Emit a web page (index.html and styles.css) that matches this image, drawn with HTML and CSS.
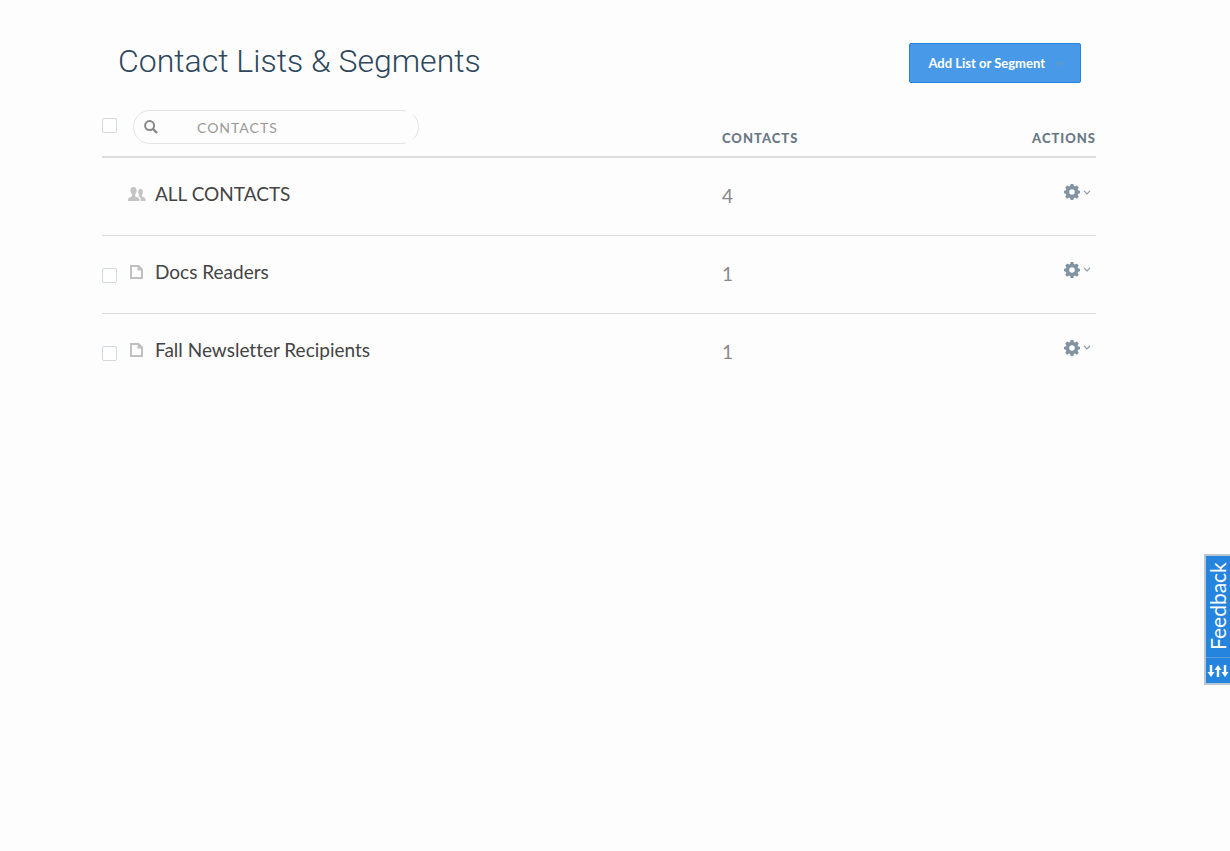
FILE: index.html
```html
<!DOCTYPE html>
<html lang="en">
<head>
<meta charset="utf-8">
<title>Contact Lists &amp; Segments</title>
<link rel="stylesheet" href="styles.css">
</head>
<body>
<svg class="sprite" aria-hidden="true">
  <symbol id="gear" viewBox="0 0 16 16"><path fill-rule="evenodd" d="M6.600 0h2.800l.4 2.100 1.200.5 1.800-1.200 2 2-1.200 1.800.5 1.200 1.900.3v2.600l-1.900.4-.5 1.300 1.200 1.700-2 2-1.800-1.200-1.200.5L9.400 16H6.600l-.4-2-1.200-.5-1.800 1.200-2-2L2.400 11l-.5-1.300L0 9.300V6.700l1.900-.3.5-1.200L1.200 3.400l2-2L5 2.600l1.200-.5zM8 5.200a2.800 2.800 0 1 0 0 5.600 2.800 2.800 0 0 0 0-5.600z"/></symbol>
  <symbol id="chevron" viewBox="0 0 8 5"><path d="M1 .8 4 3.800 7 .8" fill="none" stroke="currentColor" stroke-width="1.200"/></symbol>
  <symbol id="page" viewBox="0 0 13 14"><path d="M1 1h7.500L12 4.500V13H1z" fill="none" stroke="currentColor" stroke-width="2"/><path d="M7.500 0v5.500H13z"/></symbol>
</svg>
<main class="page">
  <header class="page-header">
    <h1 class="title">Contact Lists &amp; Segments</h1>
    <button class="add-button" type="button">Add List or Segment
      <svg class="chevron" aria-hidden="true"><use href="#chevron"/></svg>
    </button>
  </header>
  <table class="lists">
    <thead>
      <tr>
        <th class="check-col"><input class="check" type="checkbox" aria-label="Select all lists"></th>
        <th class="name-col">
          <label class="search">
            <svg class="search-icon" viewBox="0 0 14 14" aria-hidden="true"><circle cx="5.600" cy="5.600" r="4.500" fill="none" stroke="currentColor" stroke-width="2"/><path d="m9 9 4 4" stroke="currentColor" stroke-width="2.400"/></svg>
            <input class="search-input" type="text" placeholder="CONTACTS" aria-label="Search contacts">
          </label>
        </th>
        <th class="count-col" scope="col">CONTACTS</th>
        <th class="action-col" scope="col">ACTIONS</th>
      </tr>
    </thead>
    <tbody>
      <tr>
        <td class="check-col"></td>
        <td class="name-col"><a class="list-link" href="#"><svg class="people" viewBox="0 0 18 15" aria-hidden="true"><path d="M5.500 0C7.500 0 8.600 1.200 8.500 3.300c.5.600.2 1.500-.3 1.900-.2 1-.6 1.600-1 2v1.700c.5 1.200 4.300 1.300 4.300 3.700V14H0v-1.400c0-2.400 3.400-2.500 3.900-3.700V7.200c-.4-.4-.8-1-1-2-.5-.4-.7-1.300-.3-1.900C2.500 1.200 3.500 0 5.500 0zM12.500 2c1.800 0 2.500 1.200 2.300 2.700.4.500.2 1.200-.2 1.500-.1.900-.5 1.400-.8 1.700v1.200c.5 1 3.700 1.300 3.700 3.400V14h-4.800v-1.700c0-1.800-1.200-2.700-2.700-3.300.8-.2 1.200-.5 1.300-.8V7.900c-.3-.3-.7-.8-.8-1.700-.4-.3-.6-1-.2-1.500C10.100 3.200 10.900 2 12.500 2z"/></svg>ALL CONTACTS</a></td>
        <td class="count-col">4</td>
        <td class="action-col"><button class="menu" type="button" aria-label="Actions for all contacts"><svg class="gear"><use href="#gear"/></svg><svg class="chevron"><use href="#chevron"/></svg></button></td>
      </tr>
      <tr>
        <td class="check-col"><input class="check" type="checkbox" aria-label="Select Docs Readers"></td>
        <td class="name-col"><a class="list-link" href="#"><svg class="doc" aria-hidden="true"><use href="#page"/></svg>Docs Readers</a></td>
        <td class="count-col">1</td>
        <td class="action-col"><button class="menu" type="button" aria-label="Actions for Docs Readers"><svg class="gear"><use href="#gear"/></svg><svg class="chevron"><use href="#chevron"/></svg></button></td>
      </tr>
      <tr>
        <td class="check-col"><input class="check" type="checkbox" aria-label="Select Fall Newsletter Recipients"></td>
        <td class="name-col"><a class="list-link" href="#"><svg class="doc" aria-hidden="true"><use href="#page"/></svg>Fall Newsletter Recipients</a></td>
        <td class="count-col">1</td>
        <td class="action-col"><button class="menu" type="button" aria-label="Actions for Fall Newsletter Recipients"><svg class="gear"><use href="#gear"/></svg><svg class="chevron"><use href="#chevron"/></svg></button></td>
      </tr>
    </tbody>
  </table>
</main>
<button class="feedback" type="button">
  <span class="feedback-label">Feedback</span>
  <span class="feedback-mark"><svg class="arrows" viewBox="0 0 20 12" aria-hidden="true"><path d="M1.800 0h2.400v7h2.300L3 12-.5 7h2.300zM8.800 12h2.400V5h2.300L10 0 6.500 5h2.300zM15.800 0h2.400v7h2.300L17 12l-3.500-5h2.300z"/></svg></span>
</button>
</body>
</html>
```

FILE: styles.css
```css
* { box-sizing: border-box; }

body {
  margin: 0;
  background: #fdfdfd;
  color: #444;
  font-family: Lato, "Liberation Sans", sans-serif;
  font-variant-ligatures: none;
}

button, input { font: inherit; }

.sprite { display: none; }
.page { margin: 0 134px 0 102px; }

.page-header {
  display: flex;
  align-items: flex-end;
  justify-content: space-between;
  padding: 39px 15px 0 16px;
}

.title {
  margin: 0;
  color: #2e475d;
  font: 300 32px/44px Roboto, sans-serif;
}

.add-button {
  display: flex;
  align-items: center;
  gap: 11px;
  height: 40px;
  padding: 0 16px 0 18px;
  border: 1px solid #2483e2;
  border-radius: 2px;
  background: #489ae8;
  color: #fff;
  font-size: 13px;
  font-weight: 700;
}

.add-button .chevron { color: #7495b4; }

.lists {
  width: 100%;
  table-layout: fixed;
  border-collapse: collapse;
}

th, td {
  padding: 0;
  text-align: left;
  vertical-align: top;
}

thead tr { height: 74px; border-bottom: 2px solid #dcdcdc; }
tbody tr { height: 78px; }
tbody tr + tr { border-top: 1px solid #dcdcdc; }

.check-col { width: 26px; }
.count-col { width: 187px; }
.action-col { width: 187px; text-align: right; }

th.check-col { padding-top: 35px; }
td.check-col { padding-top: 32px; }
th.name-col { padding: 27px 0 0 5px; }

th.count-col, th.action-col {
  padding-top: 46px;
  color: #6a7884;
  font-size: 13px;
  font-weight: 900;
  line-height: 18px;
  letter-spacing: 1px;
}

td.name-col { padding-top: 24px; }

td.count-col {
  padding-top: 26px;
  color: #888;
  font-size: 19px;
  line-height: 24px;
}

td.action-col { padding: 26px 5px 0 0; }

.check {
  display: block;
  appearance: none;
  width: 15px;
  height: 15px;
  margin: 0;
  border: 1px solid #d3d8df;
  border-radius: 2px;
  background: #fff;
}

.search {
  position: relative;
  display: flex;
  align-items: center;
  width: 286px;
  height: 34px;
  padding-left: 10px;
  border: 1px solid #e4e4e4;
  border-radius: 17px;
}

/* Opens the outline between the field and its rounded end cap. */
.search::after {
  content: "";
  position: absolute;
  top: -1px;
  right: 5px;
  bottom: -1px;
  width: 7px;
  background: #fdfdfd;
}

.search-icon {
  flex: none;
  width: 14px;
  height: 14px;
  color: #888;
}

.search-input {
  flex: 1;
  min-width: 0;
  padding: 0 12px 0 39px;
  border: 0;
  outline: 0;
  background: transparent;
  color: #888;
  font-size: 14px;
  font-weight: 400;
  letter-spacing: 1px;
}

.search-input::placeholder { color: #999; opacity: 1; }

.list-link {
  display: flex;
  align-items: center;
  color: #444;
  font-size: 19px;
  line-height: 24px;
  text-decoration: none;
}

.people { width: 18px; height: 15px; margin-right: 9px; fill: #c4c4c4; }
.doc { width: 13px; height: 14px; margin: 0 12px 0 2px; color: #c0c0c0; fill: #c0c0c0; }

.menu {
  display: inline-flex;
  align-items: center;
  gap: 3px;
  padding: 0;
  border: 0;
  background: none;
  color: #8999a6;
}

.gear { width: 16px; height: 16px; fill: #8093a2; }
.chevron { width: 8px; height: 5px; }

.feedback {
  position: fixed;
  top: 554px;
  right: 0;
  display: flex;
  flex-direction: column;
  width: 26px;
  height: 131px;
  padding: 0;
  border: 2px solid #bac6d0;
  border-right: 0;
  background: #2585de;
  color: #fff;
}

.feedback-label {
  display: flex;
  flex: 1;
  align-items: center;
  width: 24px;
  padding-top: 7px;
  font-size: 21px;
  line-height: 24px;
  writing-mode: vertical-rl;
  transform: rotate(180deg);
}

.feedback-mark {
  display: flex;
  align-items: center;
  justify-content: center;
  width: 24px;
  height: 26px;
  border-top: 1px solid #5b9dd8;
}

.arrows { width: 20px; height: 12px; overflow: visible; fill: #fff; }
```
